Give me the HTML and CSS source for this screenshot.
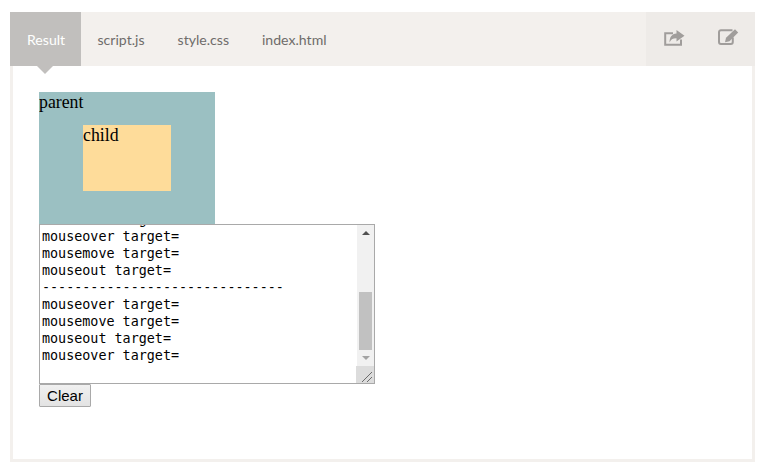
FILE: index.html
```html
<!DOCTYPE html>
<html lang="en">
<head>
<meta charset="utf-8">
<title>Result</title>
<link rel="stylesheet" href="styles.css">
</head>
<body>
<div class="embed">
  <header class="bar">
    <nav class="tabs">
      <a class="tab active">Result</a>
      <a class="tab">script.js</a>
      <a class="tab">style.css</a>
      <a class="tab">index.html</a>
    </nav>
    <div class="actions">
      <svg class="icon-share" width="21" height="16" viewBox="0 0 21 16">
        <path class="stroke" d="M9 3.2H1.2V14.8H17V9.5"/>
        <path class="fill" d="M12.5 0L20.5 5.8L12.5 11.6V8.2C8.5 8.2 6.6 9.6 5.6 12.6C5.3 7.5 7.8 3.6 12.5 3.4Z"/>
      </svg>
      <svg class="icon-edit" width="21" height="16" viewBox="0 0 21 16">
        <path class="stroke" d="M14.5 1.2H3A2 2 0 0 0 1 3.2V13A2 2 0 0 0 3 15H12.8A2 2 0 0 0 14.8 13V8.5"/>
        <path class="fill" d="M17 0.3L20.2 3.4L11.5 12.2L7 13.2L8 8.8Z"/>
      </svg>
    </div>
  </header>
  <span class="pointer"></span>
  <main class="result">
    <div class="parent">parent
      <div class="child">child</div>
    </div>
    <div class="log">
      <div class="log-text">
        <div class="lines">mouseout target=
mouseover target=
mousemove target=
mouseout target=
------------------------------
mouseover target=
mousemove target=
mouseout target=
mouseover target=</div>
      </div>
      <div class="scrollbar">
        <span class="arrow up"></span>
        <span class="thumb"></span>
        <span class="arrow down"></span>
        <span class="grip">
          <svg width="18" height="17" viewBox="0 0 18 17"><path d="M6 16L16 6M11 16L16 11" /></svg>
        </span>
      </div>
    </div>
    <button class="clear" type="button">Clear</button>
  </main>
</div>
</body>
</html>
```
FILE: styles.css
```css
* { box-sizing: border-box; }

html, body {
  margin: 0;
  background: #fff;
}

body {
  padding: 12px 4px 8px 10px;
  overflow: hidden;
}

.embed {
  position: relative;
  width: 745px;
  height: 450px;
  display: flex;
  flex-direction: column;
}

.bar {
  height: 54px;
  display: flex;
  justify-content: space-between;
  background: #f3f0ed;
}

.tabs {
  display: flex;
}

.tab {
  padding: 0 16.5px;
  font: 14.1px/56px Lato, sans-serif;
  color: #6f6c6a;
}

.tab.active {
  width: 71px;
  padding: 0 17px;
  background: #c1bfbd;
  color: #fff;
}

.actions {
  width: 109px;
  display: flex;
  align-items: flex-start;
  gap: 33px;
  padding-left: 18px;
  background: #eeebe8;
}

.icon-share { margin-top: 18px; }
.icon-edit { margin-top: 17px; }

.stroke {
  fill: none;
  stroke: #a09d9b;
  stroke-width: 2;
}

.fill { fill: #a09d9b; }

.pointer {
  position: absolute;
  left: 27px;
  top: 54px;
  width: 0;
  height: 0;
  border-left: 8px solid transparent;
  border-right: 8px solid transparent;
  border-top: 8px solid #c1bfbd;
}

.result {
  flex: 1;
  padding: 26px 26px 0;
  border: 3px solid #f3f0ed;
  border-top: 0;
}

.parent {
  width: 176px;
  height: 132px;
  overflow: hidden;
  background: #9bc0c2;
  color: #000;
  font: 17.8px/21px "Liberation Serif", serif;
}

.child {
  width: 88px;
  height: 66px;
  margin: 12px 0 0 44px;
  background: #fedc9a;
}

.log {
  width: 336px;
  height: 160px;
  display: flex;
  border: 1px solid #a9a9a9;
  background: #fff;
}

.log-text {
  flex: 1;
  overflow: hidden;
  padding-left: 2px;
}

.lines {
  margin-top: -14px;
  white-space: pre;
  font: 13.4px/17px "DejaVu Sans Mono", monospace;
  color: #000;
}

.scrollbar {
  width: 17px;
  display: flex;
  flex-direction: column;
  align-items: center;
  background: #f1f1f1;
}

.arrow {
  width: 0;
  height: 0;
  border-left: 4px solid transparent;
  border-right: 4px solid transparent;
}

.arrow.up {
  margin-top: 6px;
  border-bottom: 4px solid #505050;
}

.thumb {
  width: 13px;
  height: 58px;
  margin-top: 57px;
  background: #c1c1c1;
}

.arrow.down {
  margin-top: 6px;
  border-top: 4px solid #a3a3a3;
}

.grip {
  width: 18px;
  height: 17px;
  margin-top: auto;
  margin-left: -1px;
  background: #dcdcdc;
}

.grip svg {
  display: block;
}

.grip path {
  fill: none;
  stroke: #6b6b6b;
  stroke-width: 1;
}

.clear {
  display: block;
  width: 52px;
  height: 23px;
  padding: 0;
  border: 1px solid #a9a9a9;
  border-radius: 1px;
  background: linear-gradient(#f0f0f0, #e3e3e3);
  color: #000;
  font: 15px "Liberation Sans", sans-serif;
}
```
